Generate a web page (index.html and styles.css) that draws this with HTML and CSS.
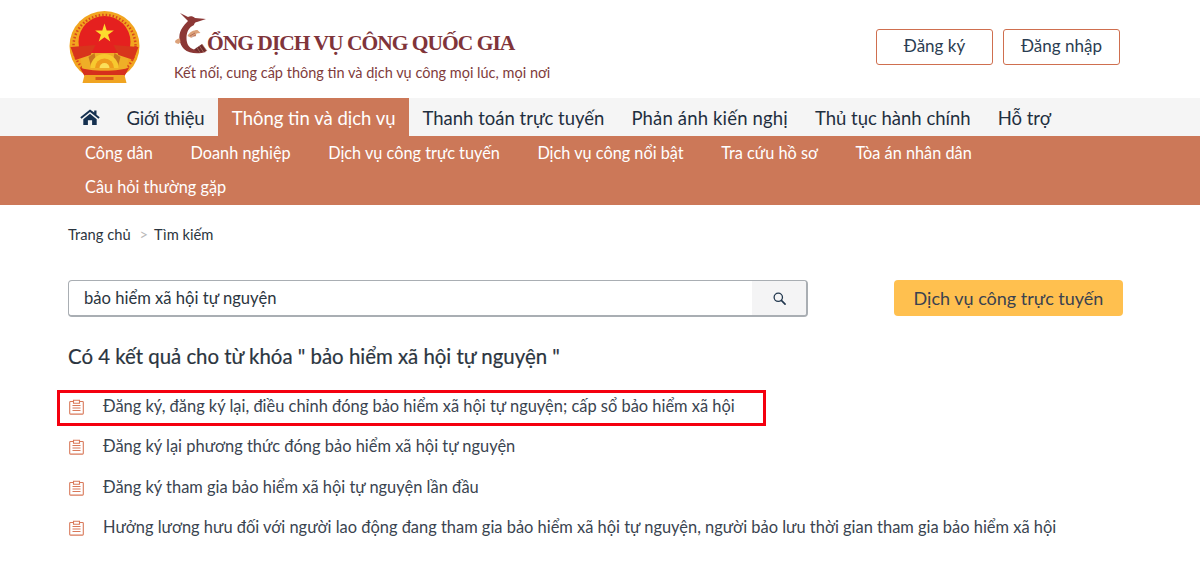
FILE: index.html
```html
<!DOCTYPE html>
<html lang="vi">
<head>
<meta charset="utf-8">
<title>Cổng Dịch vụ công Quốc gia</title>
<link rel="stylesheet" href="styles.css">
</head>
<body>
<header class="top">
  <svg class="emblem" viewBox="0 0 72 72" aria-hidden="true">
    <circle cx="36" cy="35" r="35" fill="#f2a51f"/>
    <circle cx="36" cy="35" r="31" fill="none" stroke="#d9471c" stroke-width="2.500" stroke-dasharray="1.500 2"/>
    <circle cx="36" cy="31" r="26" fill="#e5201f"/>
    <path d="M36 10l4.700 14.500h15.200l-12.300 9 4.700 14.500L36 39l-12.300 9 4.700-14.500-12.300-9h15.200z" fill="#fcdc2e" transform="translate(36 22) scale(.47) translate(-36 -30)"/>
    <path d="M11 42h50l-3 17H14z" fill="#efae27"/>
    <path d="M2 36l25-2-5 10-15 5zM70 36l-25-2 5 10 15 5z" fill="#d8341c"/>
    <path d="M20 46l6-4 2 10-5 5zM52 46l-6-4-2 10 5 5z" fill="#c9761f"/>
    <path d="M22 57a14 14 0 0 1 28 0z" fill="#f7c92f"/>
    <path d="M26.500 57a9.500 9.500 0 0 1 19 0z" fill="#ee9b1c"/>
    <path d="M31 57a5 5 0 0 1 10 0z" fill="#fbe05a"/>
    <path d="M11 56c8 5 42 5 50 0l-5 9H16z" fill="#d62f1c"/>
    <path d="M16 64h40l2 8H14z" fill="#f0a421"/>
    <path d="M27 66h18v3H27z" fill="#d8571c"/>
  </svg>
  <div class="brand">
    <div class="brand-title">
      <svg class="logo-c" viewBox="0 0 36 44" aria-hidden="true">
        <path d="M5 2l8 4c2-1 5-1 7 1l11 1-9 3c-2 0-3 2-3 3-5 2-7.500 7-7.500 13 0 6 2.500 10 7.500 11.500l9-.5 3 3c-7 2-17 2-22-3-5-5-6-13-3-19 2-4 5-7 7-9z" fill="#8c3836"/>
        <path d="M19 38.500l8-5.500 5 7-8 1.500z" fill="#6f2b2c"/>
        <path d="M27 33l5 7M24.500 35l4 6M22 36.500l3 5" stroke="#c08a6c" stroke-width=".6" fill="none"/>
        <path d="M12.500 25c2-4 6-6 10-6l3 3-4 .500-1 3-3-.500-1 2z" fill="#dca27a"/>
        <path d="M0 30c2-2 4-3 5-2l.500 3-2 2-3-1z" fill="#dca27a"/>
        <path d="M15 25l5-3M17 26l4-2" stroke="#8c3836" stroke-width=".5" fill="none"/>
      </svg>
      <span>ỔNG DỊCH VỤ CÔNG QUỐC GIA</span>
    </div>
    <div class="brand-sub">Kết nối, cung cấp thông tin và dịch vụ công mọi lúc, mọi nơi</div>
  </div>
  <div class="auth">
    <a class="auth-btn">Đăng ký</a>
    <a class="auth-btn">Đăng nhập</a>
  </div>
</header>

<nav class="nav">
  <a class="nav-home" aria-label="Trang chủ">
    <svg viewBox="0 0 20 16" width="20" height="16" aria-hidden="true">
      <path d="M10 0.600L0.300 8.300l1.200 1.500L10 3l8.500 6.800 1.200-1.500-3.200-2.600V1.500h-2.300v2Z" fill="#14304f"/>
      <path d="M3.300 10.200L10 4.800l6.700 5.400V16h-4.600v-4.800H7.900V16H3.300Z" fill="#14304f"/>
    </svg>
  </a>
  <a class="nav-item">Giới thiệu</a>
  <a class="nav-item active">Thông tin và dịch vụ</a>
  <a class="nav-item">Thanh toán trực tuyến</a>
  <a class="nav-item">Phản ánh kiến nghị</a>
  <a class="nav-item">Thủ tục hành chính</a>
  <a class="nav-item">Hỗ trợ</a>
</nav>
<div class="subnav">
  <a>Công dân</a>
  <a>Doanh nghiệp</a>
  <a>Dịch vụ công trực tuyến</a>
  <a>Dịch vụ công nổi bật</a>
  <a>Tra cứu hồ sơ</a>
  <a>Tòa án nhân dân</a>
  <a>Câu hỏi thường gặp</a>
</div>

<main class="main">
  <div class="crumbs"><a>Trang chủ</a><span class="sep">&gt;</span><a>Tìm kiếm</a></div>
  <div class="search-row">
    <div class="search">
      <div class="search-input">bảo hiểm xã hội tự nguyện</div>
      <div class="search-btn">
        <svg viewBox="0 0 14 14" width="13" height="13" aria-hidden="true">
          <circle cx="5.700" cy="5.700" r="4.500" fill="none" stroke="#22384f" stroke-width="1.400"/>
          <path d="M9 9l4 4" stroke="#22384f" stroke-width="1.800" stroke-linecap="round"/>
        </svg>
      </div>
    </div>
    <a class="dvc-btn">Dịch vụ công trực tuyến</a>
  </div>
  <h2 class="result-title">Có 4 kết quả cho từ khóa " bảo hiểm xã hội tự nguyện "</h2>
  <ul class="results">
    <li class="result highlighted"><svg class="doc"><use href="#doc"/></svg><span>Đăng ký, đăng ký lại, điều chỉnh đóng bảo hiểm xã hội tự nguyện; cấp sổ bảo hiểm xã hội</span></li>
    <li class="result"><svg class="doc"><use href="#doc"/></svg><span>Đăng ký lại phương thức đóng bảo hiểm xã hội tự nguyện</span></li>
    <li class="result"><svg class="doc"><use href="#doc"/></svg><span>Đăng ký tham gia bảo hiểm xã hội tự nguyện lần đầu</span></li>
    <li class="result"><svg class="doc"><use href="#doc"/></svg><span>Hưởng lương hưu đối với người lao động đang tham gia bảo hiểm xã hội tự nguyện, người bảo lưu thời gian tham gia bảo hiểm xã hội</span></li>
  </ul>
</main>
<svg class="defs" aria-hidden="true">
  <symbol id="doc" viewBox="0 0 15 16">
    <path d="M4 2.500H1.500a.8.8 0 0 0-.8.8v11a.8.8 0 0 0 .8.8h12a.8.8 0 0 0 .8-.8v-11a.8.800 0 0 0-.8-.8H11M4.500 1.200h6v3h-6zM3.500 6.500h8M3.500 9h8M3.500 11.500h8" fill="none" stroke="#d9795a" stroke-width="1.100"/>
  </symbol>
</svg>
</body>
</html>
```
FILE: styles.css
```css
*, *::after { box-sizing: border-box; }
html, body { margin: 0; padding: 0; }
body {
  width: 1200px;
  height: 576px;
  overflow: hidden;
  background: #fff;
  color: #2b3540;
  font-family: "Lato", "Open Sans", sans-serif;
}
a { color: inherit; text-decoration: none; }
.defs { width: 0; height: 0; display: block; }

.top {
  height: 98px;
  display: flex;
  align-items: flex-start;
  padding: 11px 80px 0 68px;
}
.emblem { width: 73px; height: 72px; flex: none; }
.brand { margin-left: 33px; padding-top: 2px; }
.brand-title {
  display: flex;
  align-items: flex-end;
  height: 42px;
  color: #80343a;
  font-family: "Liberation Serif", serif;
  font-weight: 700;
  font-size: 21.500px;
  letter-spacing: -1px;
}
.logo-c { width: 36px; height: 44px; margin-right: -4px; flex: none; margin-left: 1px; }
.brand-title span { line-height: 24px; white-space: nowrap; }
.brand-sub {
  margin-top: 8px;
  color: #7f3c3c;
  font-size: 14.500px;
  line-height: 20px;
  white-space: nowrap;
}
.auth { margin-left: auto; display: flex; gap: 10px; padding-top: 18px; }
.auth-btn {
  width: 117px;
  height: 36px;
  padding-bottom: 3px;
  border: 1px solid #cf6f4f;
  border-radius: 3px;
  display: flex;
  align-items: center;
  justify-content: center;
  font-size: 17px;
  color: #2b3d52;
}

.nav {
  height: 38px;
  background: #f5f5f5;
  display: flex;
  padding-left: 68px;
  color: #1f2f3f;
  font-size: 18.500px;
}
.nav-home { width: 45px; display: flex; align-items: center; padding-left: 12px; }
.nav-item { display: flex; align-items: center; padding: 1px 13.500px 0; white-space: nowrap; }
.nav-item:nth-child(2) { padding-right: 14px; letter-spacing: -0.2px; }
.nav-item:nth-child(5) { letter-spacing: 0.16px; }
.nav-item.active { background: #cc7858; color: #fff; }

.subnav {
  background: #cc7858;
  color: #fff;
  height: 69px;
  padding: 0 100px 0 85px;
  display: flex;
  flex-wrap: wrap;
  column-gap: 37.500px;
  align-content: flex-start;
  font-size: 16.300px;
  line-height: 34px;
}

.main { padding: 0 77px 0 68px; }
.crumbs {
  padding-top: 20px;
  height: 75px;
  font-size: 14.700px;
  line-height: 18px;
  color: #2b3540;
}
.sep { color: #b9b9b9; margin: 0 6px 0 9px; }
.search-row { display: flex; align-items: flex-start; justify-content: space-between; }
.search {
  width: 740px;
  height: 37px;
  border: 1px solid #a9aeb3;
  border-bottom-width: 2px;
  border-right-width: 2px;
  border-radius: 4px;
  display: flex;
  overflow: hidden;
}
.search-input {
  flex: 1;
  padding-left: 15px;
  font-size: 16.600px;
  line-height: 34px;
}
.search-btn {
  width: 54px;
  background: #f4f4f5;
  display: flex;
  align-items: center;
  justify-content: center;
}
.dvc-btn {
  width: 229px;
  height: 36px;
  padding-bottom: 1px;
  background: #ffc04f;
  border-radius: 4px;
  display: flex;
  align-items: center;
  justify-content: center;
  font-size: 18px;
  color: #3a4250;
}
.result-title {
  margin: 26px 0 0;
  font-size: 20.400px;
  font-weight: 400;
  -webkit-text-stroke: 0.2px #2b3540;
  line-height: 26px;
  height: 26px;
  white-space: nowrap;
}
.results { list-style: none; margin: 16px 0 0; padding: 0; }
.result {
  position: relative;
  height: 40.500px;
  display: flex;
  align-items: center;
  font-size: 16.430px;
  white-space: nowrap;
  color: #3a4450;
}
.doc { width: 15px; height: 16px; margin: 3px 19px 0 1px; flex: none; }
.highlighted::after {
  content: "";
  position: absolute;
  left: -11px;
  top: 5px;
  width: 709px;
  height: 36px;
  border: 3px solid #f4000f;
}
```
